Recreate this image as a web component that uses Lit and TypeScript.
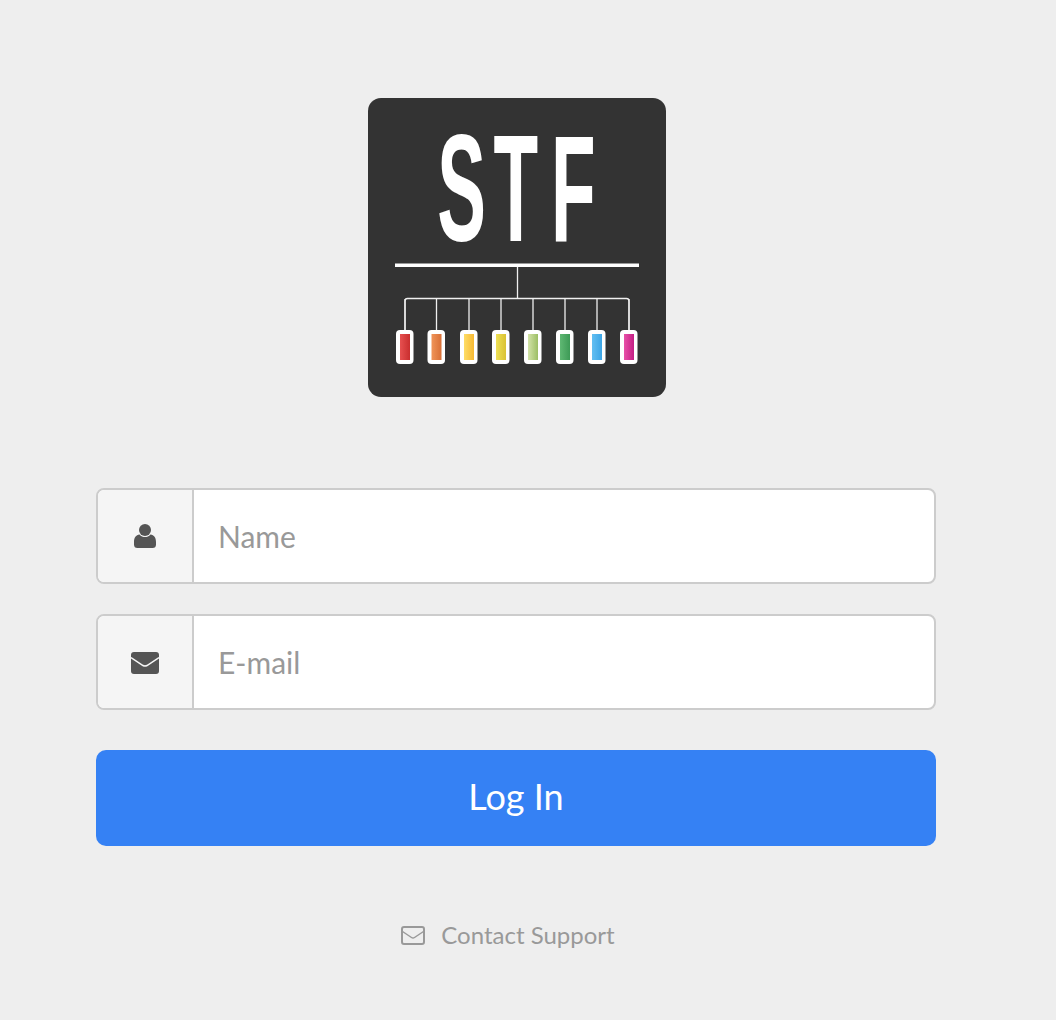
import { LitElement, css, html, svg } from 'lit';
import { customElement } from 'lit/decorators.js';

const DEVICES = [
  { x: 405, from: '#e65050', to: '#c92e2e' },
  { x: 436.5, from: '#f09458', to: '#d86f36' },
  { x: 469, from: '#fedd66', to: '#f7b933' },
  { x: 501, from: '#eee055', to: '#dac233' },
  { x: 533, from: '#d3e3a8', to: '#9cbe64' },
  { x: 565, from: '#5fb873', to: '#3d9a56' },
  { x: 597, from: '#62bff2', to: '#3ca5e6' },
  { x: 629, from: '#e850a8', to: '#c41e84' },
];

@customElement('app-root')
export class AppRoot extends LitElement {
  private logo() {
    return html`
      <svg class="logo" viewBox="368 98 298 299" width="298" height="299">
        <defs>
          ${DEVICES.map(
            (d, i) => svg`
              <linearGradient id="screen-${i}">
                <stop offset="0" stop-color=${d.from}></stop>
                <stop offset="1" stop-color=${d.to}></stop>
              </linearGradient>
            `,
          )}
        </defs>
        <rect x="368" y="98" width="298" height="299" rx="13" fill="#333"></rect>
        <text
          class="wordmark"
          transform="translate(0 241) scale(0.48 1)"
          x="911 1028 1148"
          y="0"
        >STF</text>
        <rect x="395" y="263.5" width="244" height="3.5" fill="#fff"></rect>
        <path
          d="M517.5 267V298.5M405 330V301a2.5 2.5 0 0 1 2.5-2.5H626.500a2.5 2.500 0 0 1 2.500 2.500V330"
          fill="none"
          stroke="#f0f0f0"
          stroke-width="1.300"
        ></path>
        ${DEVICES.map(
          (d, i) => svg`
            <path d="M${d.x} 299V330" stroke="#f0f0f0" stroke-width="1.300"></path>
            <rect x=${d.x - 9} y="330" width="17.500" height="34" rx="4" fill="#fff"></rect>
            <rect x=${d.x - 5} y="334" width="10" height="26" fill="url(#screen-${i})"></rect>
          `,
        )}
      </svg>
    `;
  }

  render() {
    return html`
      <main>
        ${this.logo()}
        <form @submit=${(e: Event) => e.preventDefault()}>
          <label class="field">
            <span class="addon">
              <svg width="22" height="24" viewBox="0 0 22 24">
                <circle cx="11" cy="6" r="6" fill="#555"></circle>
                <path
                  d="M5.500 10.500C7 12.500 9 13 11 13s4-.5 5.500-2.500C20 11 22 13.500 22 18v2.500a3.500 3.500 0 0 1-3.500 3.500h-15A3.500 3.500 0 0 1 0 20.500V18c0-4.500 2-7 5.500-7.500z"
                  fill="#555"
                ></path>
              </svg>
            </span>
            <input type="text" placeholder="Name" />
          </label>
          <label class="field">
            <span class="addon">
              <svg class="envelope" width="28" height="22" viewBox="0 0 28 22">
                <rect width="28" height="22" rx="3" fill="#555"></rect>
                <path d="M0 5.500L12 13.500q2 1.200 4 0L28 5.500" fill="none" stroke="#f5f5f5" stroke-width="1.500"></path>
              </svg>
            </span>
            <input type="email" placeholder="E-mail" />
          </label>
          <button type="submit">Log In</button>
        </form>
        <a class="support" href="#">
          <svg width="24" height="19" viewBox="0 0 24 19">
            <rect x="1" y="1" width="22" height="17" rx="2" fill="none" stroke="#999" stroke-width="2"></rect>
            <path d="M1.500 5.500L10.500 11.500q1.500 1 3 0L22.500 5.500" fill="none" stroke="#999" stroke-width="1.500"></path>
          </svg>
          Contact Support
        </a>
      </main>
    `;
  }

  static styles = css`
    :host {
      display: block;
      min-height: 1020px;
      background: #eee;
      font-family: Lato, 'Open Sans', sans-serif;
    }

    main {
      display: flex;
      flex-direction: column;
      align-items: center;
      padding: 98px 24px 0 0;
    }

    .logo {
      display: block;
      margin: 0 0 91px 2px;
    }

    .wordmark {
      fill: #fff;
      font-family: 'Liberation Sans', Arial, sans-serif;
      font-size: 152px;
      font-weight: 700;
    }

    form {
      display: flex;
      flex-direction: column;
      width: 840px;
    }

    .field {
      display: flex;
      height: 96px;
      box-sizing: border-box;
      margin-bottom: 30px;
      border: 2px solid #ccc;
      border-radius: 8px;
      background: #fff;
      overflow: hidden;
    }

    .addon {
      display: flex;
      align-items: center;
      justify-content: center;
      flex: none;
      box-sizing: border-box;
      width: 96px;
      border-right: 2px solid #ccc;
      background: #f5f5f5;
    }

    .envelope {
      margin-top: 2px;
    }

    input {
      flex: 1;
      min-width: 0;
      padding: 0 24px;
      border: 0;
      outline: 0;
      background: transparent;
      color: #555;
      font: 400 30px Lato, 'Open Sans', sans-serif;
    }

    input::placeholder {
      color: #999;
      opacity: 1;
    }

    button {
      height: 96px;
      margin-top: 10px;
      padding: 0 0 4px;
      border: 0;
      border-radius: 10px;
      background: #3581f4;
      color: #fff;
      font: 400 36px Lato, 'Open Sans', sans-serif;
    }

    .support {
      display: flex;
      align-items: center;
      gap: 16px;
      margin: 74px 16px 0 0;
      color: #999;
      font-size: 24px;
      line-height: 30px;
      text-decoration: none;
    }
  `;
}

declare global {
  interface HTMLElementTagNameMap {
    'app-root': AppRoot;
  }
}
